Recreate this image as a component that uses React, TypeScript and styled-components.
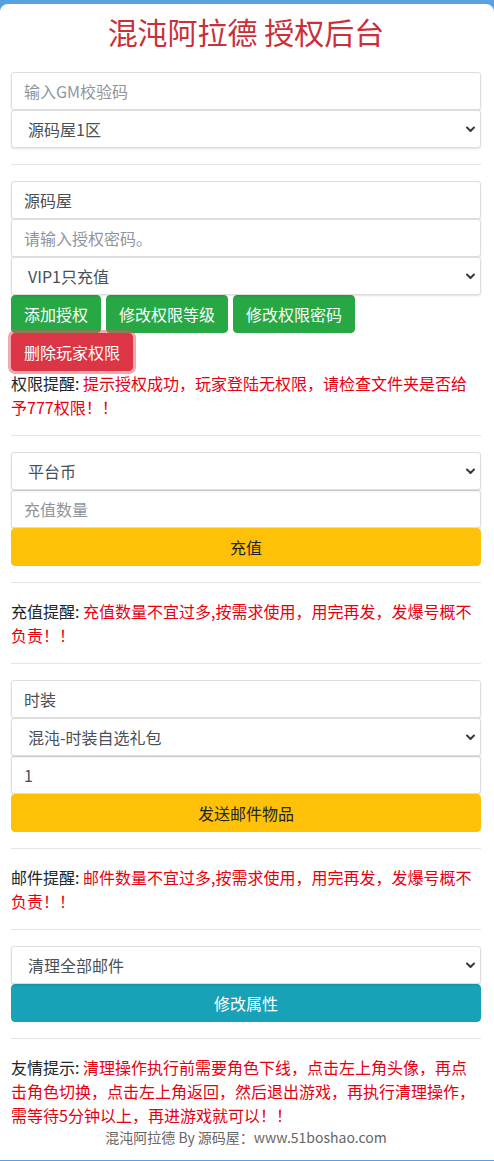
import React from "react";
import styled, { createGlobalStyle } from "styled-components";

const Global = createGlobalStyle`
  html, body { margin: 0; padding: 0; }
  body {
    background: linear-gradient(180deg, #5a9fe0 0%, #3f86d0 100%);
    font-family: "Noto Sans CJK SC", "Noto Sans", sans-serif;
    font-size: 16px;
    line-height: 1.5;
    color: #212529;
  }
  * { box-sizing: border-box; }
`;

const Card = styled.div`
  margin-top: 4px;
  background: #fff;
  border-radius: 8px 8px 0 0;
  padding: 9px 13px 12px 11px;
`;

const Title = styled.h2`
  margin: 0 0 23px;
  text-align: center;
  font-size: 30px;
  font-weight: 400;
  line-height: 36px;
  color: #c9303a;
`;

const Stack = styled.div`
  display: flex;
  flex-direction: column;
`;

const fieldCss = `
  display: block;
  width: 100%;
  height: 38px;
  padding: 6px 12px;
  font-family: "Noto Sans CJK SC", "Noto Sans", sans-serif;
  font-size: 16px;
  line-height: 1.5;
  color: #495057;
  background: #fff;
  border: 1px solid #dedede;
  border-radius: 3px;
  box-shadow: 0 1px 2px rgba(0, 0, 0, 0.12);
  outline: none;
`;

const Input = styled.input`
  ${fieldCss}
  &::placeholder { color: #8e959c; }
`;

const SelectWrap = styled.div`
  position: relative;
`;

const Select = styled.select`
  ${fieldCss}
  appearance: none;
  -webkit-appearance: none;
  padding-left: 16px;
`;

const Chevron = styled.svg`
  position: absolute;
  right: 6px;
  top: 16px;
  width: 9px;
  height: 7px;
  pointer-events: none;
`;

const Divider = styled.hr`
  margin: 16px 0;
  border: 0;
  border-top: 1px solid rgba(0, 0, 0, 0.1);
`;

const ButtonRow = styled.div`
  display: flex;
  flex-wrap: wrap;
  column-gap: 5px;
`;

type Tone = "green" | "red" | "yellow" | "teal";
const tones: Record<Tone, { bg: string; fg: string }> = {
  green: { bg: "#28a745", fg: "#fff" },
  red: { bg: "#dc3545", fg: "#fff" },
  yellow: { bg: "#ffc107", fg: "#212529" },
  teal: { bg: "#17a2b8", fg: "#fff" },
};

const Button = styled.button<{ $tone: Tone; $block?: boolean; $focus?: boolean }>`
  display: ${(p) => (p.$block ? "block" : "inline-block")};
  width: ${(p) => (p.$block ? "100%" : "auto")};
  height: 38px;
  padding: 6px 12px;
  font-family: "Noto Sans CJK SC", "Noto Sans", sans-serif;
  font-size: 16px;
  line-height: 1.5;
  border: 1px solid ${(p) => tones[p.$tone].bg};
  border-radius: 4px;
  background: ${(p) => tones[p.$tone].bg};
  color: ${(p) => tones[p.$tone].fg};
  box-shadow: ${(p) => (p.$focus ? "0 0 0 3px rgba(225, 83, 97, 0.5)" : "none")};
  cursor: pointer;
`;

const Notice = styled.div`
  font-size: 16px;
  line-height: 24px;
  color: #212529;
`;

const Warn = styled.span`
  color: #e60012;
`;

const Footer = styled.div`
  text-align: center;
  font-size: 14px;
  line-height: 21px;
  color: #666;
`;

const Arrow = () => (
  <Chevron viewBox="0 0 9 7">
    <path d="M1 1.5l3.5 3.5 3.5-3.5" fill="none" stroke="#343a40" strokeWidth="2" strokeLinecap="round" strokeLinejoin="round" />
  </Chevron>
);

const Dropdown = ({ value }: { value: string }) => (
  <SelectWrap>
    <Select defaultValue={value}>
      <option value={value}>{value}</option>
    </Select>
    <Arrow />
  </SelectWrap>
);

export default function App() {
  return (
    <>
      <Global />
      <Card>
        <Title>混沌阿拉德 授权后台</Title>
        <Stack>
          <Input placeholder="输入GM校验码" />
          <Dropdown value="源码屋1区" />
        </Stack>
        <Divider />
        <Stack>
          <Input defaultValue="源码屋" />
          <Input placeholder="请输入授权密码。" />
          <Dropdown value="VIP1只充值" />
        </Stack>
        <ButtonRow>
          <Button $tone="green">添加授权</Button>
          <Button $tone="green">修改权限等级</Button>
          <Button $tone="green">修改权限密码</Button>
          <Button $tone="red" $focus>删除玩家权限</Button>
        </ButtonRow>
        <Notice>
          权限提醒: <Warn>提示授权成功，玩家登陆无权限，请检查文件夹是否给予777权限！！</Warn>
        </Notice>
        <Divider />
        <Stack>
          <Dropdown value="平台币" />
          <Input placeholder="充值数量" />
          <Button $tone="yellow" $block>充值</Button>
        </Stack>
        <Divider />
        <Notice>
          充值提醒: <Warn>充值数量不宜过多,按需求使用，用完再发，发爆号概不负责！！</Warn>
        </Notice>
        <Divider />
        <Stack>
          <Input defaultValue="时装" />
          <Dropdown value="混沌-时装自选礼包" />
          <Input defaultValue="1" />
          <Button $tone="yellow" $block>发送邮件物品</Button>
        </Stack>
        <Divider />
        <Notice>
          邮件提醒: <Warn>邮件数量不宜过多,按需求使用，用完再发，发爆号概不负责！！</Warn>
        </Notice>
        <Divider />
        <Stack>
          <Dropdown value="清理全部邮件" />
          <Button $tone="teal" $block>修改属性</Button>
        </Stack>
        <Divider />
        <Notice>
          友情提示: <Warn>清理操作执行前需要角色下线，点击左上角头像，再点击角色切换，点击左上角返回，然后退出游戏，再执行清理操作，需等待5分钟以上，再进游戏就可以！！</Warn>
        </Notice>
        <Footer>混沌阿拉德 By 源码屋：www.51boshao.com</Footer>
      </Card>
    </>
  );
}
